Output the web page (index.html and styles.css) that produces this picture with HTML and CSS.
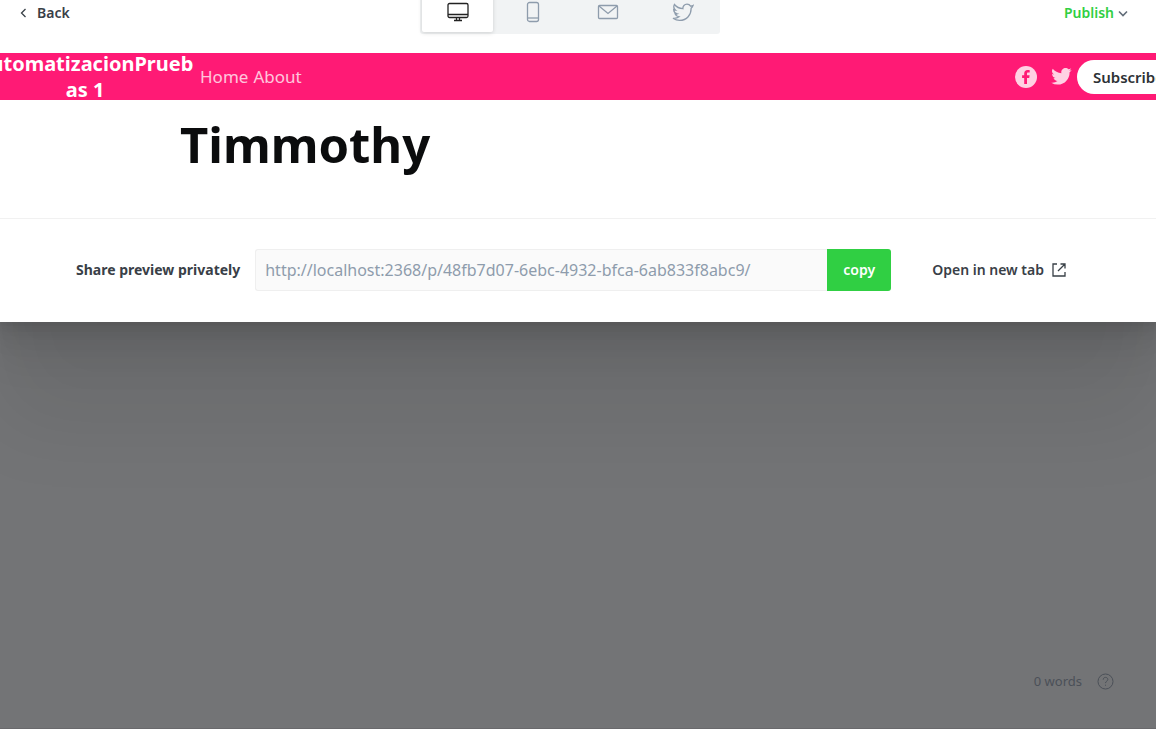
FILE: index.html
```html
<!DOCTYPE html>
<html lang="en">
<head>
<meta charset="utf-8">
<meta name="viewport" content="width=device-width, initial-scale=1">
<title>Post preview</title>
<link rel="stylesheet" href="styles.css">
</head>
<body>
<main class="modal">
  <header class="topbar">
    <button class="back" type="button">
      <svg width="7" height="10" viewBox="0 0 7 10"><path d="M5.5 1 1.5 5l4 4"/></svg>
      Back
    </button>
    <div class="tabs">
      <button class="tab tab-active" type="button" aria-label="Desktop">
        <svg width="22" height="20" viewBox="0 0 22 20"><rect x="1" y="1.5" width="20" height="14" rx="1.5"/><path d="M1 12.5h20M9.500 15.500v3M12.500 15.500v3M7 18.500h8"/></svg>
      </button>
      <button class="tab" type="button" aria-label="Mobile">
        <svg width="14" height="22" viewBox="0 0 14 22"><rect x="1.500" y="1.500" width="11" height="19" rx="2"/><path d="M1.500 17h11"/></svg>
      </button>
      <button class="tab" type="button" aria-label="Email">
        <svg width="22" height="16" viewBox="0 0 22 16"><rect x="1.500" y="1.500" width="19" height="13" rx="1"/><path d="m2 2 9 7.500L20 2"/></svg>
      </button>
      <button class="tab" type="button" aria-label="Social">
        <svg width="22" height="19" viewBox="0 0 22 19"><path d="M21 2.600c-.8.4-1.500.5-2.400.6C17.800 1.900 16.500 1.200 15 1.200c-2.500 0-4.300 2-4.100 4.500C7.300 5.500 4.400 4 2.400 1.500c-1 2-.6 4.300 1.200 5.700-.7 0-1.200-.2-1.900-.5.1 2.100 1.400 3.600 3.400 4.200-.6.2-1.200.2-1.900.1.600 1.600 2 2.600 3.800 2.800-1.500 1.200-3.600 1.700-6 1.500 2 1.300 4.200 2.100 6.600 2.100 7.300 0 11.700-5.700 11.500-12.200.9-.6 1.500-1.400 1.900-2.600z"/></svg>
      </button>
    </div>
    <button class="publish" type="button">
      Publish
      <svg width="10" height="7" viewBox="0 0 10 7"><path d="m1 1.500 4 4 4-4"/></svg>
    </button>
  </header>

  <section class="preview">
    <nav class="site-nav">
      <a class="site-title" href="#">AutomatizacionPrueb<wbr>as 1</a>
      <div class="site-links"><a href="#">Home</a><a href="#">About</a></div>
      <div class="site-actions">
        <a href="#" aria-label="Facebook"><svg class="facebook" width="22" height="22" viewBox="0 0 22 22"><circle cx="11" cy="11" r="11"/><path class="letter" d="M9.200 18v-6H7.100V9.300h2.100V7.500C9.200 5.200 10.500 4 12.700 4c.9 0 1.700.1 2 .2v2.400h-1.400c-1.100 0-1.300.5-1.300 1.300v1.400h2.600l-.4 2.700H12v6z"/></svg></a>
        <a href="#" aria-label="Twitter"><svg width="21" height="17" viewBox="0 0 24 20"><path d="M24 2.300c-.9.400-1.800.7-2.800.8 1-.6 1.800-1.600 2.200-2.700-1 .6-2 1-3.100 1.200a4.900 4.900 0 0 0-8.400 4.500C7.700 5.900 4.100 3.900 1.700.9a4.900 4.900 0 0 0 1.500 6.600c-.8 0-1.600-.2-2.200-.6v.1c0 2.400 1.700 4.400 3.900 4.800-.7.200-1.500.2-2.200.1.600 2 2.400 3.400 4.600 3.400A9.900 9.900 0 0 1 0 17.300 14 14 0 0 0 7.500 19.500c9.100 0 14.300-7.700 14-14.600 1-.7 1.800-1.600 2.500-2.600z"/></svg></a>
        <button class="subscribe" type="button">Subscribe</button>
      </div>
    </nav>
    <h1 class="post-title">Timmothy</h1>
  </section>

  <footer class="share">
    <label class="share-label" for="url">Share preview privately</label>
    <div class="share-field">
      <input class="share-url" id="url" type="text" readonly value="http://localhost:2368/p/48fb7d07-6ebc-4932-bfca-6ab833f8abc9/">
      <button class="copy" type="button">copy</button>
    </div>
    <a class="open-tab" href="#">Open in new tab
      <svg width="14" height="14" viewBox="0 0 14 14"><path d="M5 1H1v12h12V9M8.500 1H13v4.500M13 1 6 8"/></svg>
    </a>
  </footer>
</main>
<div class="editor-status">
  <span>0 words</span>
  <svg width="17" height="17" viewBox="0 0 17 17"><circle cx="8.500" cy="8.500" r="7.500"/><path d="M6.200 6.700c0-1.500 1-2.300 2.300-2.300s2.300.8 2.300 2.100c0 1.700-2.300 1.700-2.300 3.600M8.500 11.700v1"/></svg>
</div>
</body>
</html>
```

FILE: styles.css
```css
* { box-sizing: border-box; }
body {
  margin: 0;
  min-height: 100vh;
  display: flex;
  flex-direction: column;
  justify-content: space-between;
  overflow: hidden;
  background: #737476;
  border-bottom: 1px solid #69696c;
  font: 14px/20px "Noto Sans", sans-serif;
  color: #394047;
}
a { color: inherit; text-decoration: none; }
button { font: inherit; color: inherit; border: 0; background: none; padding: 0; }
svg { display: block; flex: none; fill: none; stroke: currentColor; stroke-width: 1.300; }

.modal {
  background: #fff;
  box-shadow: 0 3px 2px rgba(0,0,0,.02), 0 7px 5px rgba(0,0,0,.028), 0 12px 10px rgba(0,0,0,.035), 0 22px 18px rgba(0,0,0,.042), 0 42px 33px rgba(0,0,0,.05), 0 100px 80px rgba(0,0,0,.07);
}

.topbar {
  display: grid;
  grid-template-columns: 1fr auto 1fr;
  margin-top: -8px;
  padding: 0 28px 19px 12px;
}
.back, .publish { display: flex; align-items: center; font-weight: 600; }
.back { gap: 10px; padding-left: 8px; justify-self: start; }
.publish { gap: 4px; justify-self: end; color: #30cf43; }
.publish svg { color: #626d79; stroke-width: 1.600; }
.tabs { display: flex; gap: 4px; padding: 0 2px 2px; background: #f1f3f4; border-radius: 3px; height: 42px; }
.tab { display: flex; align-items: center; justify-content: center; width: 71px; color: #8e9cac; border-radius: 2px; }
.tab-active { background: #fff; color: #222; box-shadow: 0 1px 4px rgba(0,0,0,.15); }

.preview { border-bottom: 1px solid #f1f1f1; overflow: hidden; }
.site-nav {
  display: flex;
  align-items: center;
  height: 47px;
  margin: 0 -24px;
  background: #ff1a75;
  color: #fff;
}
.site-title { width: 218px; flex: none; text-align: center; font-size: 20px; line-height: 26px; font-weight: 700; }
.site-links { display: flex; gap: 5px; margin-left: 6px; font-size: 17px; opacity: .75; }
.site-actions { display: flex; align-items: center; margin-left: auto; gap: 14px; }
.site-actions svg { fill: #ffd1e3; stroke: none; }
.site-actions .letter { fill: #ff1a75; }
.subscribe { width: 103px; height: 34px; margin-left: -9px; background: #fff; border-radius: 17px; color: #2d3135; font-size: 15px; font-weight: 600; }
.post-title { margin: 0; padding: 12px 180px 42px; font-size: 49px; line-height: 64px; font-weight: 700; color: #0b0c0d; }

.share { display: flex; align-items: center; padding: 30px 90px 31px 76px; }
.share-label { font-weight: 700; white-space: nowrap; }
.share-field { display: flex; flex: 1; height: 42px; margin: 0 41px 0 15px; }
.share-url { flex: 1; min-width: 0; padding: 0 9px; border: 1px solid #efefef; border-right: 0; border-radius: 3px 0 0 3px; background: #fafafa; color: #8e9cac; font: inherit; font-size: 16px; }
.copy { width: 64px; border-radius: 0 3px 3px 0; background: #30cf43; color: #fff; font-weight: 600; }
.open-tab { display: flex; align-items: center; gap: 8px; font-weight: 600; white-space: nowrap; }

.editor-status { display: flex; align-items: center; justify-content: flex-end; gap: 15px; padding: 0 42px 37px; font-size: 13px; color: #4b5058; }
.editor-status svg { stroke-width: 1; }
```
